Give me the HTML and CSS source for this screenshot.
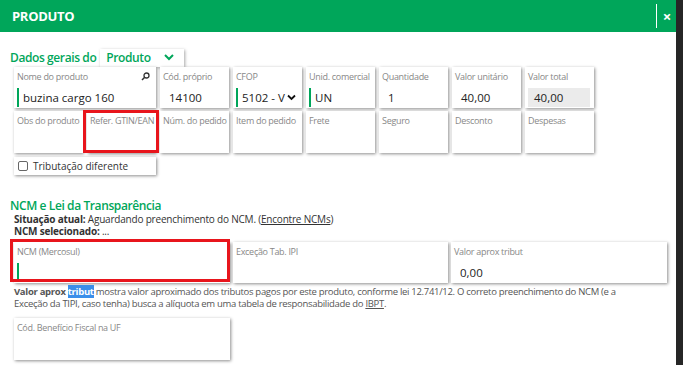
FILE: index.html
```html
<!DOCTYPE html>
<html lang="pt-BR">
<head>
    <meta charset="UTF-8">
    <meta name="viewport" content="width=device-width, initial-scale=1.0">
    <title>Produto</title>
    <link rel="stylesheet" href="styles.css">
</head>
<body>
    <div class="modal">
        <!-- Cabeçalho do modal -->
        <div class="modal-header">
            <span class="modal-title">PRODUTO</span>
            <span class="close-btn">&times;</span>
        </div>

        <div class="modal-body">
            <div class="section-title">
                Dados gerais do
                <span class="select-box">Produto
                    <svg width="10" height="7" viewBox="0 0 10 7"><path d="M1 1 L5 5 L9 1" fill="none" stroke="#00a65a" stroke-width="2"/></svg>
                </span>
            </div>

            <!-- Campos do produto -->
            <div class="grid">
                <div class="card span2">
                    <div class="label">Nome do produto
                        <svg class="search" width="9" height="9" viewBox="0 0 9 9"><circle cx="5.5" cy="3.5" r="2.5" fill="none" stroke="#333" stroke-width="1.3"/><path d="M3.7 5.3 L1 8" stroke="#333" stroke-width="1.5"/></svg>
                    </div>
                    <div class="input req">buzina cargo 160</div>
                </div>
                <div class="card">
                    <div class="label">Cód. próprio</div>
                    <div class="input">14100</div>
                </div>
                <div class="card">
                    <div class="label">CFOP</div>
                    <div class="input req select">5102 - V
                        <svg width="9" height="7" viewBox="0 0 9 7"><path d="M1 1.5 L4.5 5 L8 1.5" fill="none" stroke="#111" stroke-width="1.8"/></svg>
                    </div>
                </div>
                <div class="card">
                    <div class="label">Unid. comercial</div>
                    <div class="input req">UN</div>
                </div>
                <div class="card">
                    <div class="label">Quantidade</div>
                    <div class="input">1</div>
                </div>
                <div class="card">
                    <div class="label">Valor unitário</div>
                    <div class="input">40,00</div>
                </div>
                <div class="card">
                    <div class="label">Valor total</div>
                    <div class="input disabled">40,00</div>
                </div>

                <div class="card tall"><div class="label">Obs do produto</div></div>
                <div class="card tall"><div class="label">Refer. GTIN/EAN</div></div>
                <div class="card tall"><div class="label">Núm. do pedido</div></div>
                <div class="card tall"><div class="label">Item do pedido</div></div>
                <div class="card tall"><div class="label">Frete</div></div>
                <div class="card tall"><div class="label">Seguro</div></div>
                <div class="card tall"><div class="label">Desconto</div></div>
                <div class="card tall"><div class="label">Despesas</div></div>
            </div>

            <div class="check-card">
                <span class="checkbox"></span> Tributação diferente
            </div>

            <div class="section-title ncm-title">NCM e Lei da Transparência</div>
            <div class="status">
                <div><b>Situação atual:</b> Aguardando preenchimento do NCM. (<u>Encontre NCMs</u>)</div>
                <div><b>NCM selecionado:</b> ...</div>
            </div>

            <div class="ncm-grid">
                <div class="card">
                    <div class="label">NCM (Mercosul)</div>
                    <div class="input req"></div>
                </div>
                <div class="card">
                    <div class="label">Exceção Tab. IPI</div>
                </div>
                <div class="card">
                    <div class="label">Valor aprox tribut</div>
                    <div class="input">0,00</div>
                </div>
            </div>

            <p class="help">
                <b>Valor aprox <span class="hl">tribut</span></b> mostra valor aproximado dos tributos pagos por este produto, conforme lei 12.741/12. O correto preenchimento do NCM (e a Exceção da TIPI, caso tenha) busca a alíquota em uma tabela de responsabilidade do <u>IBPT</u>.
            </p>

            <div class="card wide tall"><div class="label">Cód. Benefício Fiscal na UF</div></div>
        </div>

        <!-- marcações em vermelho -->
        <div class="mark mark-gtin"></div>
        <div class="mark mark-ncm"></div>
    </div>
    <div class="scrollbar"></div>
</body>
</html>
```

FILE: styles.css
```css
body {
    margin: 0;
    display: flex;
    font-family: "Open Sans", "Noto Sans", sans-serif;
    background-color: #fff;
    height: 365px;
    overflow: hidden;
}

.modal {
    position: relative;
    width: 676px;
    height: 365px;
    background: #fff;
}

.scrollbar {
    width: 7px;
    height: 365px;
    background-color: #262626;
}

.modal-header {
    height: 32px;
    background-color: #00a65a;
    display: flex;
    align-items: center;
    justify-content: space-between;
    padding-left: 12px;
}

.modal-title {
    color: #fff;
    font-weight: 700;
    font-size: 13px;
    letter-spacing: -0.3px;
}

.close-btn {
    color: #fff;
    font-weight: 700;
    font-size: 15px;
    line-height: 24px;
    width: 18px;
    padding-left: 1px;
    border-left: 1px solid #fff;
    text-align: center;
}

.modal-body {
    padding: 16px 9px 0 14px;
}

.section-title {
    color: #00a65a;
    font-weight: 600;
    font-size: 12px;
    letter-spacing: -0.4px;
    display: flex;
    align-items: center;
    margin-left: -4px;
    height: 19px;
}

.select-box {
    display: inline-flex;
    align-items: center;
    gap: 13px;
    margin-left: 4px;
    height: 18px;
    padding: 0 10px 0 6px;
    box-shadow: 1px 1px 3px rgba(0, 0, 0, 0.35);
}

.grid {
    display: grid;
    grid-template-columns: repeat(8, 69px);
    gap: 3px 4px;
}

.card {
    background: #fff;
    height: 41px;
    box-shadow: 1px 1px 3px rgba(0, 0, 0, 0.45);
    overflow: hidden;
}

.card.tall {
    height: 42px;
}

.span2 {
    grid-column: span 2;
}

.label {
    font-size: 9px;
    color: #888;
    padding: 3px 0 0 3px;
    letter-spacing: -0.3px;
    white-space: nowrap;
    display: flex;
    justify-content: space-between;
}

.search {
    margin: 2px 6px 0 0;
}

.input {
    margin: 5px 4px 0 3px;
    height: 19px;
    display: flex;
    align-items: center;
    padding-left: 4px;
    font-size: 11.5px;
    color: #222;
    border-left: 2px solid transparent;
    white-space: nowrap;
}

.input.req {
    border-left-color: #00a65a;
}

.input.select {
    justify-content: space-between;
    padding-right: 2px;
}

.input.disabled {
    background-color: #ebebeb;
}

.check-card {
    width: 138px;
    height: 18px;
    margin-top: 4px;
    padding-left: 4px;
    display: flex;
    align-items: center;
    gap: 5px;
    font-size: 10px;
    color: #333;
    box-shadow: 1px 1px 3px rgba(0, 0, 0, 0.45);
}

.checkbox {
    width: 8px;
    height: 8px;
    border: 1px solid #666;
    border-radius: 2px;
}

.ncm-title {
    margin-top: 22px;
    height: 16px;
}

.status {
    font-size: 10px;
    color: #333;
    line-height: 12px;
    letter-spacing: -0.2px;
}

.ncm-grid {
    display: grid;
    grid-template-columns: 216px 215px 216px;
    gap: 3px;
    margin-top: 5px;
}

.help {
    margin: 3px 0 0 0;
    max-width: 636px;
    font-size: 9.5px;
    line-height: 12px;
    color: #555;
    letter-spacing: -0.3px;
}

.help b {
    color: #555;
}

.hl {
    background-color: #3b8eea;
    color: #fff;
}

.wide {
    width: 216px;
    margin-top: 8px;
}

.mark {
    position: absolute;
    border: 3px solid #e8151c;
}

.mark-gtin {
    left: 83px;
    top: 110px;
    width: 70px;
    height: 37px;
}

.mark-ncm {
    left: 10px;
    top: 239px;
    width: 214px;
    height: 37px;
}
```
